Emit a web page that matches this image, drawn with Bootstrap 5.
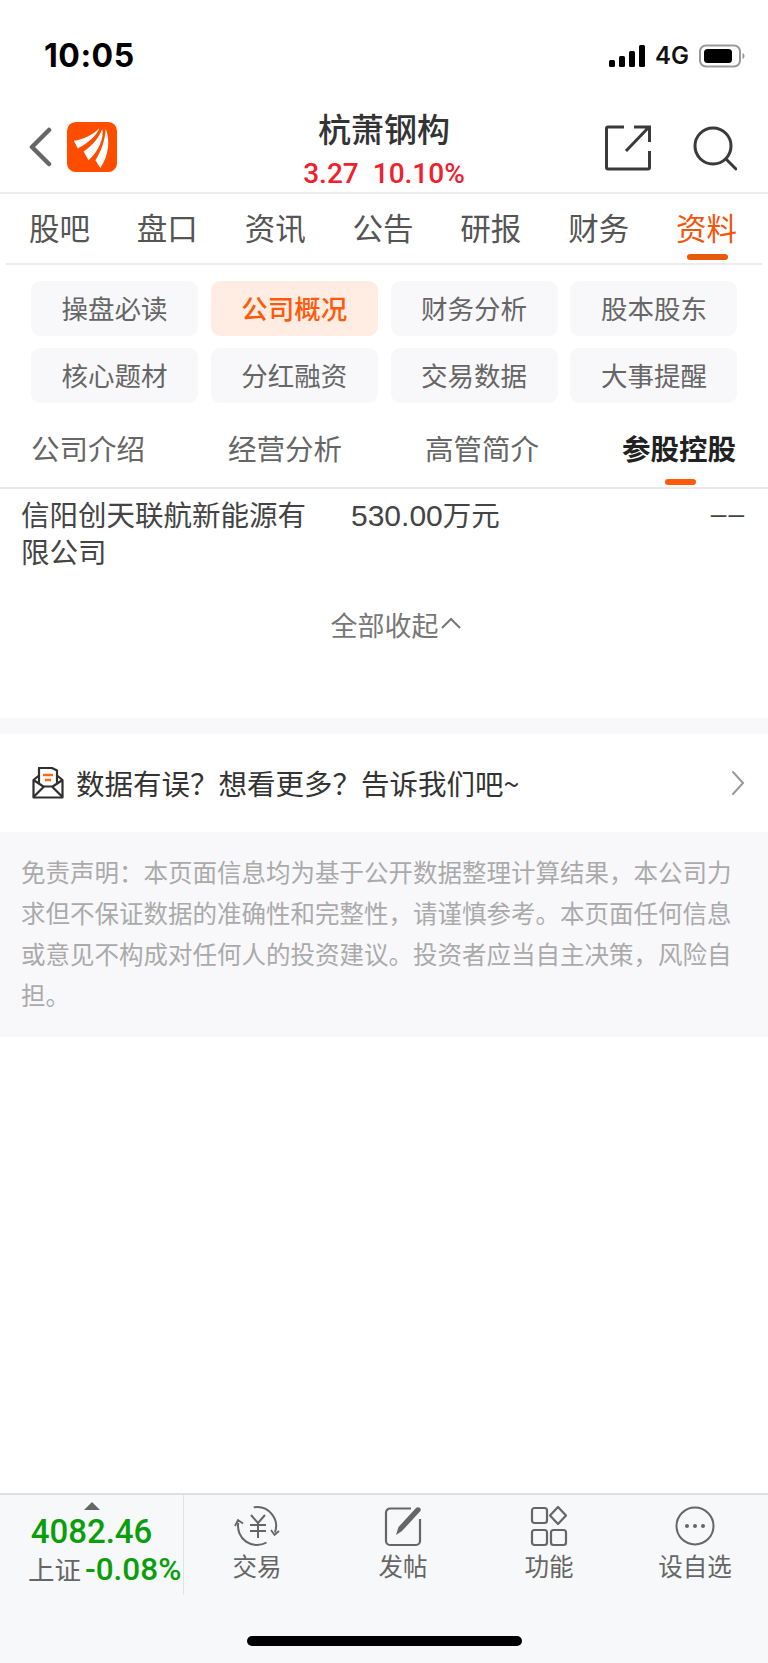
<!DOCTYPE html>
<html lang="zh-CN">
<head>
<meta charset="utf-8">
<title>杭萧钢构</title>
<link href="https://cdn.jsdelivr.net/npm/bootstrap@5.3.0/dist/css/bootstrap.min.css" rel="stylesheet">
<style>
html,body{height:100%;overflow:hidden}
body{font-family:"Noto Sans CJK SC","Liberation Sans",sans-serif;color:#333;background:#fff}
.app-shell{height:1663px}
.status-row{height:97px;padding:36px 23px 0 44px}
.clock{font:700 32px/40px Inter,"Liberation Sans",sans-serif;color:#000;letter-spacing:.5px}
.status-icons{height:40px;gap:10px}
.net-label{font:600 24px/40px Inter,"Liberation Sans",sans-serif;color:#111}
.head-row{height:97px;border-bottom:2px solid #ececec;padding:0 31px 0 28px}
.head-left{width:135px;padding-top:4px}
.brand-ico{width:50px;height:50px;margin-left:15px}
.head-mid{padding-top:9px}
.stock-name{font-size:33px;line-height:44px;font-weight:500;color:#333}
.stock-quote{font:500 28px/34px Roboto,"Liberation Sans",sans-serif;color:#f0202c;margin-top:7px}
.stock-quote span+span{margin-left:14px}
.head-right{width:132px;gap:42px;padding-top:6px}
.tab-row{height:71px;margin:0 6px;padding:0 25px 0 23px;border-bottom:2px solid #ececec}
.tab-item{font-size:30.500px;line-height:66px;color:#555;position:relative;height:68px;white-space:nowrap}
.tab-item.on{color:#f4540c}
.tab-item.on::after{content:"";position:absolute;left:11px;width:41px;bottom:2px;height:6px;border-radius:3px;background:#e8590c}
.chip-grid{display:grid;grid-template-columns:repeat(4,167px);column-gap:12.800px;row-gap:12px;padding:16px 0 0 31px}
.chip{height:55px;line-height:53px;border-radius:9px;background:#f8f8fa;color:#666;font-size:26.500px;text-align:center}
.chip.on{background:#ffede4;color:#ff5a0a;font-weight:500}
.sub-row{height:86px;padding:0 32px 0 31px;border-bottom:2px solid #e9e9e9}
.sub-item{font-size:28.500px;line-height:90px;color:#666;position:relative;height:84px;white-space:nowrap}
.sub-item.on{color:#222;font-weight:700}
.sub-item.on::after{content:"";position:absolute;left:43px;width:31px;bottom:2px;height:6px;border-radius:3px;background:#ff5a0a}
.data-row{padding:6px 22px 0 21px;font-size:28.500px;line-height:37px;color:#444}
.cell-name{width:330px;padding-right:40px}
.cell-val{width:300px;font-family:"Liberation Sans","Noto Sans CJK SC",sans-serif;font-size:30px}
.cell-val span{font-family:"Noto Sans CJK SC",sans-serif;font-size:28.500px}
.cell-dash{letter-spacing:2px;font-family:"Liberation Sans",sans-serif;font-size:28px}
.collapse-row{height:149px;font-size:27px;color:#777;padding-top:36px;padding-left:25px}
.gap-band{height:16px;background:#f8f8fa}
.report-row{height:98px;padding:0 23px 0 32px}
.report-text{font-size:28.500px;color:#333;margin-left:12px;line-height:98px}
.notice{height:205px;background:#f8f8fa;padding:19px 22px 0 21px;font-size:24.500px;line-height:41px;color:#aaa}
.dock{height:170px;background:#f7f8fa;border-top:2px solid #dfe0e2;margin-top:auto;position:relative}
.dock-index{width:184px;height:100px;border-right:1px solid #e2e3e5;text-align:center}
.tri{width:0;height:0;border:8px solid transparent;border-top:0;border-bottom:8px solid #666;margin:7px auto 0 84px}
.idx-val{font:500 33px/38px Roboto,"Liberation Sans",sans-serif;color:#0a9e0a;margin-top:3px}
.idx-sub{font-size:26.500px;line-height:36px;color:#666;white-space:nowrap;text-align:left;padding-left:28px}
.idx-sub b{font:500 31.500px/36px Roboto,"Liberation Sans",sans-serif;color:#0a9e0a;margin-left:4px}
.dock-item{width:146px;font-size:24.500px;line-height:33px;color:#666;text-align:center;padding-top:10px}
.dock-item svg{display:block;margin:0 auto 2px}
.home-pill{position:absolute;left:247px;width:275px;top:141px;height:10px;border-radius:5px;background:#000}
</style>
</head>
<body>
<div class="app-shell d-flex flex-column">

  <div class="status-row d-flex justify-content-between align-items-start">
    <div class="clock">10:05</div>
    <div class="status-icons d-flex align-items-center">
      <svg width="36" height="22" viewBox="0 0 36 22" fill="#000"><rect x="0" y="15" width="6" height="7" rx="1.500"/><rect x="10" y="11" width="6" height="11" rx="1.500"/><rect x="20" y="6" width="6" height="16" rx="1.500"/><rect x="30" y="0" width="6" height="22" rx="1.500"/></svg>
      <span class="net-label">4G</span>
      <svg width="46" height="24" viewBox="0 0 46 24"><rect x="1" y="1.500" width="40" height="21" rx="6" fill="none" stroke="#999" stroke-width="2"/><rect x="5" y="5" width="28" height="14" rx="3.500" fill="#000"/><path d="M43.500 9c1.500.5 2 1.600 2 3s-.5 2.500-2 3z" fill="#999"/></svg>
    </div>
  </div>

  <div class="head-row d-flex align-items-start">
    <div class="head-left d-flex align-items-center flex-shrink-0" style="height:95px">
      <svg width="24" height="40" viewBox="0 0 24 40" fill="none" stroke="#666" stroke-width="4.500" stroke-linecap="round" stroke-linejoin="round"><path d="M21 3 4 20l17 17"/></svg>
      <svg class="brand-ico" viewBox="0 0 51 51"><rect width="51" height="51" rx="9" fill="#ff4d00"/><path d="M7 19C16 18 27 13 33 6 30 14 22 21 11 27z" fill="#fff"/><path d="M17 30C25 25 33 16 36 7 38 17 32 30 22 39z" fill="#fff"/><path d="M29 39C35 30 39 18 39.500 7 44 18 43 34 34 47z" fill="#fff"/></svg>
    </div>
    <div class="head-mid flex-grow-1 text-center">
      <div class="stock-name">杭萧钢构</div>
      <div class="stock-quote"><span>3.27</span><span>10.10%</span></div>
    </div>
    <div class="head-right d-flex align-items-center flex-shrink-0" style="height:95px">
      <svg width="46" height="46" viewBox="0 0 46 46" fill="none" stroke="#3a3a3a" stroke-width="3"><path d="M19 2H3a1.500 1.500 0 0 0-1.500 1.500v39A1.500 1.500 0 0 0 3 44h40a1.500 1.500 0 0 0 1.500-1.500V26"/><path d="M29 2h15.500v15M44 2 21 26"/></svg>
      <svg width="44" height="46" viewBox="0 0 44 46" fill="none" stroke="#3a3a3a" stroke-width="3" stroke-linecap="round"><circle cx="20" cy="21" r="18"/><path d="m33 34 10 10"/></svg>
    </div>
  </div>

  <div class="tab-row d-flex justify-content-between">
    <div class="tab-item">股吧</div><div class="tab-item">盘口</div><div class="tab-item">资讯</div><div class="tab-item">公告</div><div class="tab-item">研报</div><div class="tab-item">财务</div><div class="tab-item on">资料</div>
  </div>

  <div class="chip-grid">
    <div class="chip">操盘必读</div><div class="chip on">公司概况</div><div class="chip">财务分析</div><div class="chip">股本股东</div>
    <div class="chip">核心题材</div><div class="chip">分红融资</div><div class="chip">交易数据</div><div class="chip">大事提醒</div>
  </div>

  <div class="sub-row d-flex justify-content-between">
    <div class="sub-item">公司介绍</div><div class="sub-item">经营分析</div><div class="sub-item">高管简介</div><div class="sub-item on">参股控股</div>
  </div>

  <div class="data-row d-flex">
    <div class="cell-name">信阳创天联航新能源有限公司</div>
    <div class="cell-val">530.00<span>万元</span></div>
    <div class="cell-dash ms-auto">––</div>
  </div>

  <div class="collapse-row d-flex justify-content-center align-items-start">
    <span>全部收起</span>
    <svg class="mt-2" width="24" height="22" viewBox="0 0 24 22" fill="none" stroke="#777" stroke-width="2"><path d="m3 15 9-9 9 9"/></svg>
  </div>

  <div class="gap-band"></div>

  <div class="report-row d-flex align-items-center">
    <svg width="32" height="32" viewBox="0 0 32 32" fill="none" stroke="#2f2f2f" stroke-width="2.200" stroke-linejoin="round"><path d="M1.500 13v17.500h29V13L25 8.500V3.500L20 1H7v7.500z"/><path d="M1.500 30 12 19.500h8L30.500 30M1.500 13 12 20M30.500 13 20 20M7 8.500V17M25 8.500V17"/><path d="M11 8h10M13 13h6" stroke="#ff6a1a" stroke-width="2.500"/></svg>
    <div class="report-text">数据有误？想看更多？告诉我们吧~</div>
    <svg class="ms-auto" width="14" height="26" viewBox="0 0 14 26" fill="none" stroke="#999" stroke-width="2" stroke-linecap="round"><path d="m2 2 10 11L2 24"/></svg>
  </div>

  <div class="notice">免责声明：本页面信息均为基于公开数据整理计算结果，本公司力求但不保证数据的准确性和完整性，请谨慎参考。本页面任何信息或意见不构成对任何人的投资建议。投资者应当自主决策，风险自担。</div>

  <div class="dock d-flex">
    <div class="dock-index flex-shrink-0">
      <div class="tri"></div>
      <div class="idx-val">4082.46</div>
      <div class="idx-sub">上证<b>-0.08%</b></div>
    </div>
    <div class="d-flex flex-grow-1">
      <div class="dock-item">
        <svg width="46" height="42" viewBox="0 0 46 42" fill="none" stroke="#666" stroke-width="2"><path d="M19.700 2.300A19 19 0 0 1 40.900 27.500M32.500 37.500A19 19 0 0 1 4.300 17.700"/><path d="m37 25 3.500 5 4.500-4M1 21l3-6 5 3.500" stroke-width="1.800"/><path d="m17 10 7 8 7-8M16 20h16M16 26h16M24 18v15"/></svg>
        交易
      </div>
      <div class="dock-item">
        <svg width="40" height="42" viewBox="0 0 40 42" fill="none" stroke="#666" stroke-width="2.200"><path d="M28 3.500H7a4 4 0 0 0-4 4V36a4 4 0 0 0 4 4h26a4 4 0 0 0 4-4V14"/><path d="m13 30 2.500-8L33 3c1-1 3-1 4 0s1 2.500 0 3.500L19 26z" fill="#666" stroke="none"/></svg>
        发帖
      </div>
      <div class="dock-item">
        <svg width="38" height="42" viewBox="0 0 38 42" fill="none" stroke="#666" stroke-width="2.200"><rect x="2" y="3" width="15" height="15" rx="2.500"/><rect x="2" y="25" width="15" height="15" rx="2.500"/><rect x="21" y="25" width="15" height="15" rx="2.500"/><path d="m28 2 8 8.500-8 8.500-8-8.500z" stroke-linejoin="round"/></svg>
        功能
      </div>
      <div class="dock-item">
        <svg width="40" height="42" viewBox="0 0 40 42" fill="none" stroke="#666" stroke-width="2"><circle cx="20" cy="21" r="18.500"/><g fill="#666" stroke="none"><circle cx="12" cy="21" r="2"/><circle cx="20" cy="21" r="2"/><circle cx="28" cy="21" r="2"/></g></svg>
        设自选
      </div>
    </div>
    <div class="home-pill"></div>
  </div>
</div>
<script src="https://cdn.jsdelivr.net/npm/bootstrap@5.3.0/dist/js/bootstrap.bundle.min.js"></script>
</body>
</html>
